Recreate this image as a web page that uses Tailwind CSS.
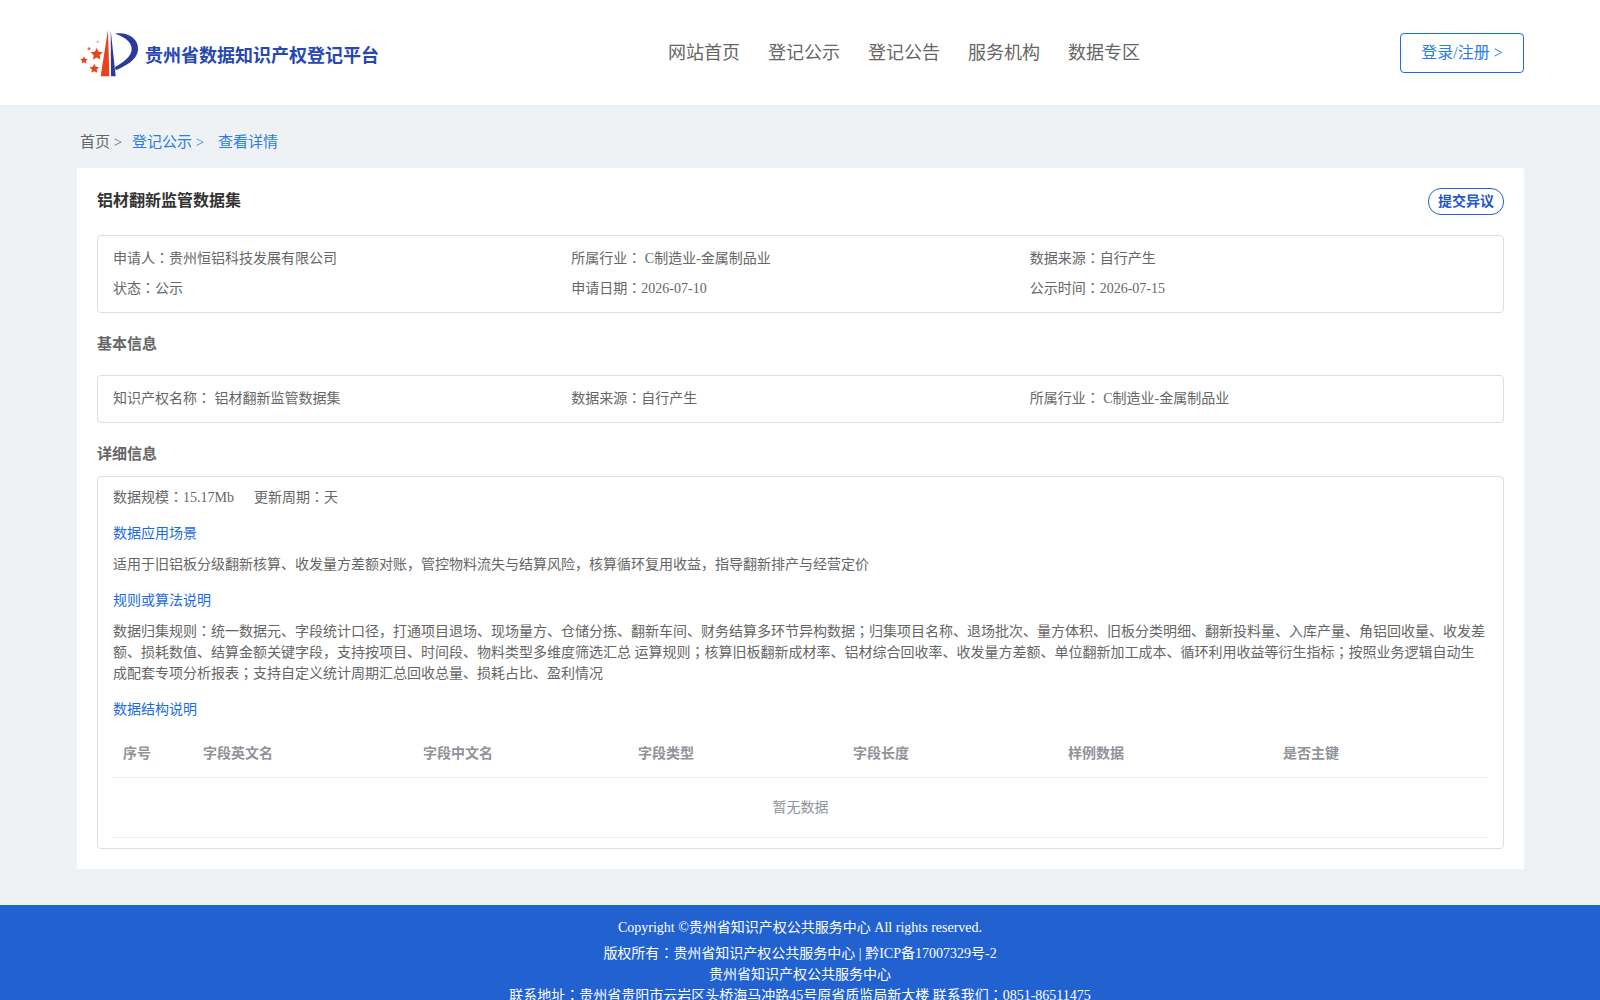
<!DOCTYPE html>
<html lang="zh-CN">
<head>
  <meta charset="UTF-8" />
  <title>查看详情</title>
  <script src="https://cdn.jsdelivr.net/npm/@tailwindcss/browser@4"></script>
</head>
<body class="bg-[#eff2f5] font-['Liberation_Serif','Noto_Sans_CJK_SC',serif] text-[#666666]">

  <!-- header -->
  <header class="flex h-[105px] items-center bg-white pl-[75px] pr-[76px]">
    <div class="flex w-[593px] items-center">
      <svg class="h-[60px] w-[70px] shrink-0" viewBox="0 0 210 180">
        <path d="M99 20 L103 160 L77 160 Z" fill="#e8431a" />
        <path d="M107 21 L122 160 L108 160 Z" fill="#2a3a9c" />
        <path d="M120 32 C160 26 192 48 189 82 C186 112 150 130 122 142 L120 132 C145 118 170 100 170 78 C170 55 145 40 120 32 Z" fill="#2a3a9c" />
        <polygon points="65,75 70.6,86.3 83.1,88.1 74,97 76.2,109.4 65,103.5 53.8,109.4 56,97 46.9,88.1 59.4,86.3" fill="#e8431a" />
        <polygon points="27,100 30.5,107.1 38.4,108.3 32.7,113.9 34.1,121.7 27,118 19.9,121.7 21.3,113.9 15.6,108.3 23.5,107.1" fill="#e8431a" />
        <polygon points="58,122 62.4,130.9 72.3,132.4 65.1,139.3 66.8,149.1 58,144.5 49.2,149.1 50.9,139.3 43.7,132.4 53.6,130.9" fill="#e8431a" />
        <circle cx="42" cy="77" r="4.5" fill="#ee6a3f" />
        <circle cx="68" cy="56" r="3" fill="#f09070" />
      </svg>
      <h1 class="pt-[7px] text-[18px] leading-[24px] font-bold text-[#2748b0]">贵州省数据知识产权登记平台</h1>
    </div>
    <nav class="flex gap-[28px] text-[18px] leading-[24px] text-[#666666]">
      <a href="#">网站首页</a>
      <a href="#">登记公示</a>
      <a href="#">登记公告</a>
      <a href="#">服务机构</a>
      <a href="#">数据专区</a>
    </nav>
    <a href="#" class="ml-auto flex h-[40px] w-[124px] items-center justify-center rounded-[4px] border border-[#1a6be8] pt-[1px] text-[16px] text-[#2b7be8]">登录/注册 &gt;</a>
  </header>

  <!-- breadcrumb -->
  <div class="flex h-[63px] pt-[26px] pl-[80px] text-[15px] leading-[22px]">
    <span class="w-[52px] text-[#666666]">首页 &gt;</span>
    <span class="w-[86px] text-[#2b7be8]">登记公示 &gt;</span>
    <span class="text-[#2b7be8]">查看详情</span>
  </div>

  <!-- card -->
  <main class="mr-[76px] mb-[36px] ml-[77px] bg-white px-[20px] pt-[20px] pb-[20px] text-[14px]">
    <div class="flex h-[27px] items-start justify-between">
      <h2 class="pt-[1px] text-[16px] leading-[24px] font-bold text-[#333333]">铝材翻新监管数据集</h2>
      <button class="h-[27px] w-[76px] rounded-[13px] border border-[#2162d0] text-[14px] leading-[24px] font-bold text-[#2257c4]">提交异议</button>
    </div>

    <div class="mt-[20px] grid grid-cols-3 rounded-[4px] border border-[#dddddd] px-[15px] pt-[8px] pb-[8px] leading-[30px]">
      <div>申请人<span lang="ja">：</span>贵州恒铝科技发展有限公司</div>
      <div>所属行业<span lang="ja">：</span> C制造业-金属制品业</div>
      <div>数据来源<span lang="ja">：</span>自行产生</div>
      <div>状态<span lang="ja">：</span>公示</div>
      <div>申请日期<span lang="ja">：</span>2026-07-10</div>
      <div>公示时间<span lang="ja">：</span>2026-07-15</div>
    </div>

    <h3 class="mt-[20px] text-[15px] leading-[22px] font-bold text-[#666666]">基本信息</h3>
    <div class="mt-[20px] grid grid-cols-3 rounded-[4px] border border-[#dddddd] px-[15px] pt-[8px] pb-[8px] leading-[30px]">
      <div>知识产权名称<span lang="ja">：</span> 铝材翻新监管数据集</div>
      <div>数据来源<span lang="ja">：</span>自行产生</div>
      <div>所属行业<span lang="ja">：</span> C制造业-金属制品业</div>
    </div>

    <h3 class="mt-[20px] text-[15px] leading-[22px] font-bold text-[#666666]">详细信息</h3>
    <div class="mt-[11px] rounded-[4px] border border-[#dddddd] px-[15px] pt-[10px] pb-[10px] leading-[21px]">
      <div class="flex gap-[20px]">
        <span>数据规模<span lang="ja">：</span>15.17Mb</span>
        <span>更新周期<span lang="ja">：</span>天</span>
      </div>
      <div class="mt-[15px] text-[#1a6be0]">数据应用场景</div>
      <p class="mt-[10px]">适用于旧铝板分级翻新核算、收发量方差额对账，管控物料流失与结算风险，核算循环复用收益，指导翻新排产与经营定价</p>
      <div class="mt-[15px] text-[#1a6be0]">规则或算法说明</div>
      <p class="mt-[10px]">数据归集规则<span lang="ja">：</span>统一数据元、字段统计口径，打通项目退场、现场量方、仓储分拣、翻新车间、财务结算多环节异构数据<span lang="ja">；</span>归集项目名称、退场批次、量方体积、旧板分类明细、翻新投料量、入库产量、角铝回收量、收发差额、损耗数值、结算金额关键字段，支持按项目、时间段、物料类型多维度筛选汇总 运算规则<span lang="ja">；</span>核算旧板翻新成材率、铝材综合回收率、收发量方差额、单位翻新加工成本、循环利用收益等衍生指标<span lang="ja">；</span>按照业务逻辑自动生成配套专项分析报表<span lang="ja">；</span>支持自定义统计周期汇总回收总量、损耗占比、盈利情况</p>
      <div class="mt-[15px] text-[#1a6be0]">数据结构说明</div>

      <table class="mt-[9px] w-full table-fixed">
        <colgroup>
          <col class="w-[80px]" />
          <col class="w-[220px]" />
          <col class="w-[215px]" />
          <col class="w-[215px]" />
          <col class="w-[215px]" />
          <col class="w-[215px]" />
          <col />
        </colgroup>
        <thead>
          <tr class="h-[48px] border-b border-[#ebeef5] text-left font-bold text-[#909399]">
            <th class="px-[10px] pt-[1px]">序号</th>
            <th class="px-[10px] pt-[1px]">字段英文名</th>
            <th class="px-[10px] pt-[1px]">字段中文名</th>
            <th class="px-[10px] pt-[1px]">字段类型</th>
            <th class="px-[10px] pt-[1px]">字段长度</th>
            <th class="px-[10px] pt-[1px]">样例数据</th>
            <th class="px-[10px] pt-[1px]">是否主键</th>
          </tr>
        </thead>
        <tbody>
          <tr class="h-[60px] border-b border-[#ebeef5]">
            <td colspan="7" class="pt-[1px] text-center text-[#909399]">暂无数据</td>
          </tr>
        </tbody>
      </table>
    </div>
  </main>

  <!-- footer -->
  <footer class="bg-[#2162d0] pt-[12px] pb-[20px] text-center text-[14px] leading-[21px] text-white">
    <p class="mb-[5px]">Copyright ©贵州省知识产权公共服务中心 All rights reserved.</p>
    <p>版权所有<span lang="ja">：</span>贵州省知识产权公共服务中心 | 黔ICP备17007329号-2</p>
    <p>贵州省知识产权公共服务中心</p>
    <p>联系地址<span lang="ja">：</span>贵州省贵阳市云岩区头桥海马冲路45号原省质监局新大楼 联系我们<span lang="ja">：</span>0851-86511475</p>
  </footer>

</body>
</html>
